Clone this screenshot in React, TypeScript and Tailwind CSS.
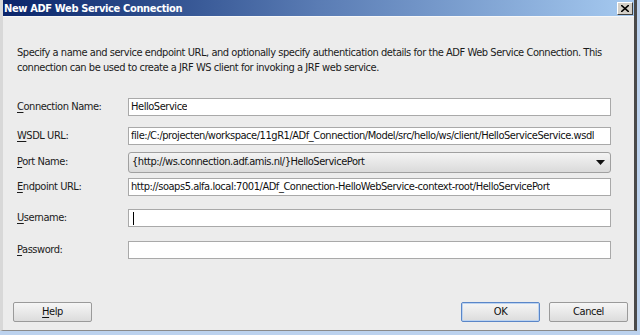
import { useState } from "react";

const font = { fontFamily: '"DejaVu Sans Condensed", "Liberation Sans", Arial, sans-serif' };

function Label({ mnemonic, rest }: { mnemonic: string; rest: string }) {
  return (
    <span className="w-[111px] shrink-0 text-[11px] text-[#1b1b1b]">
      <span className="underline underline-offset-2">{mnemonic}</span>
      {rest}
    </span>
  );
}

function TextField({ value, cursor }: { value?: string; cursor?: boolean }) {
  return (
    <div className="flex h-[18px] w-[483px] items-center border border-[#a9a9a9] bg-white px-[2px] text-[11px] text-[#111]">
      {cursor && <span className="ml-[2px] h-[13px] w-px bg-black" />}
      <span className="truncate">{value}</span>
    </div>
  );
}

function Button({ children, primary }: { children: React.ReactNode; primary?: boolean }) {
  return (
    <button
      className={
        "flex h-[20px] w-[79px] items-center justify-center rounded-[2px] border bg-gradient-to-b from-[#f6f6f6] to-[#dcdcdc] text-[11px] text-[#111] " +
        (primary ? "border-[#5a86c8] shadow-[inset_0_0_0_1px_#bcd3f0]" : "border-[#9a9a9a]")
      }
    >
      {children}
    </button>
  );
}

export default function App() {
  const [port] = useState("{http://ws.connection.adf.amis.nl/}HelloServicePort");

  return (
    <div className="h-[335px] w-[640px] overflow-hidden bg-[#bcd2ee] tracking-[-0.45px]" style={font}>
      <div className="flex h-[331px] w-[637px] flex-col border-l-[3px] border-r-[3px] border-b border-l-[#d8d8d8] border-r-[#4a4a4a] border-b-[#8a8a8a] bg-[#ececec]">
        {/* title bar */}
        <div className="flex h-[16px] shrink-0 items-center bg-gradient-to-r from-[#0a246a] via-[#5a7cb4] to-[#a6caf0] pl-[1px] pr-[1px]">
          <span className="text-[11px] font-bold leading-none tracking-[-0.35px] text-white">New ADF Web Service Connection</span>
          <div className="ml-auto flex h-[13px] w-[16px] items-center justify-center border border-t-white border-l-white border-r-[#404040] border-b-[#404040] bg-[#d4d0c8]">
            <svg width="8" height="7" viewBox="0 0 8 7">
              <path d="M0 0 L8 7 M8 0 L0 7" stroke="#000" strokeWidth="1.6" />
            </svg>
          </div>
        </div>
        <div className="h-px bg-[#f8f8f8]" />

        {/* description */}
        <p className="ml-[14px] mt-[28px] w-[610px] text-[11px] leading-[15px] text-[#1b1b1b]">
          Specify a name and service endpoint URL, and optionally specify authentication details for the ADF Web Service Connection. This
          connection can be used to create a JRF WS client for invoking a JRF web service.
        </p>

        {/* form */}
        <div className="ml-[14px] mt-[23px] flex flex-col">
          <div className="flex items-center">
            <Label mnemonic="C" rest="onnection Name:" />
            <TextField value="HelloService" />
          </div>
          <div className="mt-[11px] flex items-center">
            <Label mnemonic="W" rest="SDL URL:" />
            <TextField value="file:/C:/projecten/workspace/11gR1/ADf_Connection/Model/src/hello/ws/client/HelloServiceService.wsdl" />
          </div>
          <div className="mt-[7px] flex items-center">
            <Label mnemonic="P" rest="ort Name:" />
            <div className="flex h-[21px] w-[483px] items-center rounded-[3px] border border-[#a0a0a0] bg-gradient-to-b from-[#f4f4f4] to-[#dadada] px-[3px] text-[11px] text-[#111]">
              <span>{port}</span>
              <svg className="ml-auto mr-[2px]" width="9" height="5" viewBox="0 0 9 5">
                <path d="M0 0 H9 L4.5 5 Z" fill="#111" />
              </svg>
            </div>
          </div>
          <div className="mt-[5px] flex items-center">
            <Label mnemonic="E" rest="ndpoint URL:" />
            <TextField value="http://soaps5.alfa.local:7001/ADf_Connection-HelloWebService-context-root/HelloServicePort" />
          </div>
          <div className="mt-[13px] flex items-center">
            <Label mnemonic="U" rest="sername:" />
            <TextField cursor />
          </div>
          <div className="mt-[14px] flex items-center">
            <Label mnemonic="P" rest="assword:" />
            <TextField />
          </div>
        </div>

        {/* buttons */}
        <div className="mt-auto mb-[8px] flex items-center pl-[10px] pr-[6px]">
          <Button>
            <span>
              <span className="underline underline-offset-2">H</span>elp
            </span>
          </Button>
          <div className="ml-auto flex gap-[9px]">
            <Button primary>OK</Button>
            <Button>Cancel</Button>
          </div>
        </div>
      </div>
    </div>
  );
}
